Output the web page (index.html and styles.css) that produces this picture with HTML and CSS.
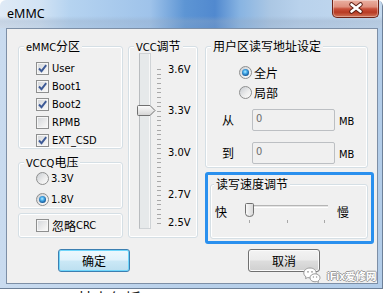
FILE: index.html
```html
<!DOCTYPE html>
<html lang="zh">
<head>
    <meta charset="UTF-8">
    <meta name="viewport" content="width=device-width, initial-scale=1.0">
    <title>eMMC</title>
    <link rel="stylesheet" href="styles.css">
</head>
<body>
    <div class="window">
        <div class="titlebar">
            <span class="title">eMMC</span>
            <span class="close">
                <svg width="47" height="18" viewBox="0 0 47 18">
                    <path d="M19.5 5.5 L28.5 12.5 M28.5 5.5 L19.5 12.5" stroke="#5a1c12" stroke-width="4.5" stroke-linecap="round" fill="none"/>
                    <path d="M19.5 5.5 L28.5 12.5 M28.5 5.5 L19.5 12.5" stroke="#fff" stroke-width="2.6" stroke-linecap="round" fill="none"/>
                </svg>
            </span>
        </div>

        <div class="client">
            <div class="panels">
                <!-- left column -->
                <div class="col-left">
                    <fieldset class="group group-parts">
                        <legend>eMMC<span class="zh">分区</span></legend>
                        <div class="check-list">
                            <label class="check"><span class="box"><svg width="11" height="11" viewBox="0 0 11 11"><path d="M2 5.5 L4.5 8.2 L9.2 2.2" stroke="#3d5a96" stroke-width="1.9" fill="none"/></svg></span>User</label>
                            <label class="check"><span class="box"><svg width="11" height="11" viewBox="0 0 11 11"><path d="M2 5.5 L4.5 8.2 L9.2 2.2" stroke="#3d5a96" stroke-width="1.9" fill="none"/></svg></span>Boot1</label>
                            <label class="check"><span class="box"><svg width="11" height="11" viewBox="0 0 11 11"><path d="M2 5.5 L4.5 8.2 L9.2 2.2" stroke="#3d5a96" stroke-width="1.9" fill="none"/></svg></span>Boot2</label>
                            <label class="check"><span class="box"></span>RPMB</label>
                            <label class="check"><span class="box"><svg width="11" height="11" viewBox="0 0 11 11"><path d="M2 5.5 L4.5 8.2 L9.2 2.2" stroke="#3d5a96" stroke-width="1.9" fill="none"/></svg></span>EXT_CSD</label>
                        </div>
                    </fieldset>

                    <fieldset class="group group-vccq">
                        <legend>VCCQ<span class="zh">电压</span></legend>
                        <div class="radio-list">
                            <label class="radio"><span class="dot"></span>3.3V</label>
                            <label class="radio on"><span class="dot"></span>1.8V</label>
                        </div>
                    </fieldset>

                    <div class="group group-crc">
                        <label class="check"><span class="box"></span><span class="zh">忽略</span>CRC</label>
                    </div>
                </div>

                <!-- VCC slider -->
                <fieldset class="group group-vcc">
                    <legend>VCC<span class="zh">调节</span></legend>
                    <div class="vslider">
                        <div class="vtrack"></div>
                        <svg class="vthumb" width="19" height="11" viewBox="0 0 19 11">
                            <defs>
                                <linearGradient id="vt" x1="0" y1="0" x2="0" y2="1">
                                    <stop offset="0" stop-color="#fdfdfd"/>
                                    <stop offset="1" stop-color="#d4d4d4"/>
                                </linearGradient>
                            </defs>
                            <path d="M1.5 0.5 H13 L18 5.5 L13 10.5 H1.5 Q0.5 10.5 0.5 9.5 V1.5 Q0.5 0.5 1.5 0.5 Z" fill="url(#vt)" stroke="#707070"/>
                        </svg>
                        <div class="vticks"></div>
                        <span class="vlabel" style="top: 12px">3.6V</span>
                        <span class="vlabel" style="top: 53px">3.3V</span>
                        <span class="vlabel" style="top: 95px">3.0V</span>
                        <span class="vlabel" style="top: 137px">2.7V</span>
                        <span class="vlabel" style="top: 165px">2.5V</span>
                    </div>
                </fieldset>

                <!-- right column -->
                <div class="col-right">
                    <fieldset class="group group-addr">
                        <legend class="zh">用户区读写地址设定</legend>
                        <div class="radio-list addr-radios">
                            <label class="radio on"><span class="dot"></span><span class="zh">全片</span></label>
                            <label class="radio"><span class="dot"></span><span class="zh">局部</span></label>
                        </div>
                        <div class="field-row first">
                            <span class="field-label zh">从</span>
                            <span class="field">0</span>
                            <span class="unit">MB</span>
                        </div>
                        <div class="field-row">
                            <span class="field-label zh">到</span>
                            <span class="field">0</span>
                            <span class="unit">MB</span>
                        </div>
                    </fieldset>

                    <div class="focus">
                        <fieldset class="group group-speed">
                            <legend class="zh">读写速度调节</legend>
                            <div class="speed-row">
                                <span class="zh speed-label">快</span>
                                <div class="hslider">
                                    <div class="htrack"></div>
                                    <span class="htick t1"></span>
                                    <span class="htick t2"></span>
                                    <span class="htick t3"></span>
                                    <svg class="hthumb" width="9" height="14" viewBox="0 0 9 14">
                                        <defs>
                                            <linearGradient id="ht" x1="0" y1="0" x2="1" y2="0">
                                                <stop offset="0" stop-color="#fbfbfb"/>
                                                <stop offset="1" stop-color="#d6d6d6"/>
                                            </linearGradient>
                                        </defs>
                                        <path d="M0.5 1.5 Q0.5 0.5 1.5 0.5 H7.5 Q8.5 0.5 8.5 1.5 V10.5 Q8.5 13.5 4.5 13.5 Q0.5 13.5 0.5 10.5 Z" fill="url(#ht)" stroke="#707070"/>
                                    </svg>
                                </div>
                                <span class="zh speed-label slow">慢</span>
                            </div>
                        </fieldset>
                    </div>
                </div>
            </div>

            <div class="actions">
                <button class="btn btn-default zh">确定</button>
                <button class="btn btn-cancel zh">取消</button>
            </div>
        </div>

        <div class="watermark">
            <svg width="18" height="16" viewBox="0 0 18 16">
                <path d="M7 1 C3.4 1 0.8 3.2 0.8 6 C0.8 7.6 1.6 8.9 3 9.8 L2.5 11.6 L4.7 10.6 C5.4 10.8 6.2 10.9 7 10.9 C10.6 10.9 13.2 8.7 13.2 6 C13.2 3.2 10.6 1 7 1 Z" fill="#fff" stroke="#9a9a9a"/>
                <path d="M12 6.8 C9.1 6.8 7 8.6 7 10.8 C7 13 9.1 14.8 12 14.8 C12.6 14.8 13.2 14.7 13.7 14.5 L15.5 15.4 L15.1 13.9 C16.3 13.1 17 12 17 10.8 C17 8.6 14.9 6.8 12 6.8 Z" fill="#fff" stroke="#9a9a9a"/>
                <circle cx="5" cy="4.8" r="0.9" fill="#9a9a9a"/>
                <circle cx="9" cy="4.8" r="0.9" fill="#9a9a9a"/>
                <circle cx="10.4" cy="10" r="0.7" fill="#9a9a9a"/>
                <circle cx="13.6" cy="10" r="0.7" fill="#9a9a9a"/>
            </svg>
            <span class="wm-text">iFix爱修网</span>
        </div>
    </div>
    <div class="below">其中包括</div>
</body>
</html>
```

FILE: styles.css
```css
* {
    box-sizing: border-box;
}
body {
    margin: 0;
    height: 293px;
    overflow: hidden;
    background: #fff;
    font-family: "DejaVu Sans Condensed", "DejaVu Sans", "Noto Sans CJK SC", sans-serif;
    font-stretch: condensed;
    font-size: 11px;
    color: #000;
}
.zh {
    font-family: "Noto Sans CJK SC", sans-serif;
    font-stretch: normal;
    font-size: 12px;
}

/* window frame */
.window {
    position: relative;
    width: 383px;
    height: 289px;
    padding: 0 5px 5px 6px;
    border-radius: 6px 6px 0 0;
    background:
        linear-gradient(180deg, rgba(255,255,255,0) 0, rgba(255,255,255,0) 16px, rgba(150,168,192,0.35) 21px, rgba(150,168,192,0.25) 28px, rgba(255,255,255,0) 28px),
        linear-gradient(90deg, #dfeaf6 0, #d2e3f4 40px, #b5d3f0 70px, #9fc3ea 150px, #5d95d4 185px, #5189cf 215px, #88b4e2 240px, #abc7e4 270px, #b9d2ec 300px, #c5daef 385px) top left / 100% 28px no-repeat,
        linear-gradient(90deg, #c9dbef 0, #b8d0ea 50%, #b3cde9 100%);
    box-shadow: inset -1px -1px 0 #6d8098;
}
.titlebar {
    height: 28px;
    display: flex;
    justify-content: space-between;
    align-items: flex-start;
}
.title {
    margin: 6px 0 0 1px;
    font-family: "Noto Sans", sans-serif;
    font-size: 12.5px;
    line-height: 16px;
}
.close {
    display: block;
    width: 47px;
    height: 18px;
    margin-right: -1px;
    border: 1px solid #6e2418;
    border-top: none;
    border-radius: 0 0 5px 5px;
    background: linear-gradient(180deg, #eab0a2 0, #df907e 40%, #c8503a 52%, #b83b24 72%, #cf7257 100%);
    box-shadow: inset 0 0 0 1px rgba(255,255,255,0.35);
}
.close svg {
    display: block;
    margin: -1px 0 0 -1px;
}

/* client area */
.client {
    position: relative;
    height: 256px;
    border: 1px solid #7d8fa6;
    background: #f0f0f0;
}
.panels {
    display: flex;
    align-items: flex-start;
    padding: 11px 0 0 11px;
}
.group {
    margin: 0;
    padding: 0;
    min-width: 0;
    border: 1px solid #d5dfe5;
    border-radius: 3px;
    box-shadow: inset 0 0 0 1px #fff;
}
.group legend {
    height: 12px;
    margin-left: 5px;
    padding: 0 2px;
    line-height: 12px;
    background: #f0f0f0;
}

/* left column */
.col-left {
    width: 105px;
}
.group-parts {
    height: 109px;
}
.check-list {
    padding: 7px 0 0 17px;
}
.check {
    display: flex;
    align-items: center;
    height: 18px;
}
.box {
    display: flex;
    align-items: center;
    justify-content: center;
    width: 13px;
    height: 13px;
    margin-right: 3px;
    border: 1px solid #8e8f8f;
    background: linear-gradient(135deg, #d2d5d9 0, #f0f0f0 70%, #fafafa 100%);
    box-shadow: inset 0 0 0 1px #f6f6f6;
}
.group-vccq {
    height: 53px;
    margin-top: 7px;
}
.radio-list {
    display: flex;
    flex-direction: column;
    gap: 2px;
    padding: 1px 0 0 17px;
}
.radio {
    display: flex;
    align-items: center;
    height: 19px;
}
.dot {
    display: flex;
    align-items: center;
    justify-content: center;
    width: 13px;
    height: 13px;
    margin-right: 2px;
    border: 1px solid #8e8f8f;
    border-radius: 50%;
    background: linear-gradient(135deg, #c8ccd1 0, #eeeeee 60%, #fbfbfb 100%);
}
.radio.on .dot::after {
    content: "";
    width: 7px;
    height: 7px;
    border-radius: 50%;
    background: radial-gradient(circle at 45% 40%, #b8ecff 0, #4cb0ec 30%, #1a64a6 65%, #0c3966 100%);
}
.group-crc {
    display: flex;
    align-items: center;
    height: 25px;
    margin-top: 4px;
    padding-left: 17px;
}

/* VCC vertical slider */
.group-vcc {
    width: 70px;
    height: 198px;
    margin-left: 5px;
}
.vslider {
    position: relative;
    height: 184px;
}
.vtrack {
    position: absolute;
    left: 10px;
    top: 1px;
    width: 12px;
    height: 176px;
    border: 1px solid #cfd3d6;
    border-left-color: #b9bcbf;
    background: #e6e9ea;
    box-shadow: inset -1px 0 0 #f7f7f7;
}
.vthumb {
    position: absolute;
    left: 8px;
    top: 53px;
}
.vticks {
    position: absolute;
    left: 28px;
    top: 17px;
    width: 4px;
    height: 155px;
    background: linear-gradient(180deg, #a8a8a8 0 1px, transparent 1px 5px, #a8a8a8 5px 6px, transparent 6px 9px, #a8a8a8 9px 10px, transparent 10px) 0 0 / 4px 14px repeat-y;
}
.vlabel {
    position: absolute;
    left: 39px;
    line-height: 12px;
}

/* right column */
.col-right {
    width: 169px;
    margin-left: 7px;
}
.group-addr {
    width: 163px;
    height: 128px;
}
.addr-radios {
    padding: 11px 0 0 33px;
    gap: 1px;
}
.field-row {
    display: flex;
    align-items: center;
    height: 22px;
    margin-top: 11px;
}
.field-row.first {
    margin-top: 7px;
}
.field-label {
    width: 30px;
    margin-left: 16px;
    line-height: 14px;
}
.field {
    width: 83px;
    height: 22px;
    padding: 3px 0 0 3px;
    border: 1px solid #bcbfc3;
    border-radius: 2px;
    background: #f0f0f0;
    color: #6d6d6d;
    line-height: 11px;
    align-self: flex-start;
}
.unit {
    margin: 2px 0 0 4px;
}

/* highlighted speed box */
.focus {
    height: 72px;
    margin-top: 4px;
    padding: 3px 3px 2px 2px;
    border: 3px solid #2a90ee;
    border-radius: 3px;
}
.group-speed {
    width: 158px;
    height: 61px;
}
.group-speed legend {
    margin-left: 3px;
}
.speed-row {
    display: flex;
    align-items: flex-start;
    padding: 12px 0 0 4px;
}
.speed-label {
    margin-top: 4px;
    line-height: 12px;
}
.speed-label.slow {
    margin-left: 7px;
}
.hslider {
    position: relative;
    width: 86px;
    height: 24px;
    margin-left: 17px;
}
.htrack {
    position: absolute;
    left: 8px;
    top: 3px;
    width: 76px;
    height: 3px;
    border-top: 1px solid #b5b5b5;
    border-bottom: 1px solid #fff;
    background: #e4e4e4;
}
.hthumb {
    position: absolute;
    left: 1px;
    top: 1px;
}
.htick {
    position: absolute;
    top: 18px;
    width: 1px;
    height: 3px;
    background: #a8a8a8;
}
.htick.t1 { left: 5px; }
.htick.t2 { left: 43px; }
.htick.t3 { left: 80px; }

/* buttons */
.actions {
    display: flex;
    margin-top: 5px;
}
.btn {
    width: 72px;
    height: 23px;
    padding: 0;
    border-radius: 3px;
    color: #000;
    line-height: 14px;
}
.btn-default {
    margin-left: 51px;
    border: 1px solid #3c7fb1;
    background: linear-gradient(180deg, #eef8fd 0, #e1f2fb 48%, #cbe8f6 52%, #bcdff0 100%);
    box-shadow: inset 0 0 0 1px #6fd6fb;
}
.btn-cancel {
    margin-left: 118px;
    border: 1px solid #707070;
    background: linear-gradient(180deg, #f3f3f3 0, #ebebeb 48%, #dddddd 52%, #d0d0d0 100%);
    box-shadow: inset 0 0 0 1px #fafafa;
}

/* watermark */
.watermark {
    position: absolute;
    left: 303px;
    top: 267px;
    display: flex;
    align-items: center;
    gap: 6px;
}
.wm-text {
    font-family: "Liberation Sans", "Noto Sans CJK SC", sans-serif;
    font-stretch: normal;
    font-weight: bold;
    font-size: 10.5px;
    color: #fff;
    text-shadow: 1px 0 0 #9a9a9a, -1px 0 0 #9a9a9a, 0 1px 0 #9a9a9a, 0 -1px 0 #9a9a9a;
}

.below {
    margin: 1px 0 0 77px;
    font-family: "Noto Sans CJK SC", sans-serif;
    font-size: 16px;
    line-height: 16px;
    color: #222;
}
```
